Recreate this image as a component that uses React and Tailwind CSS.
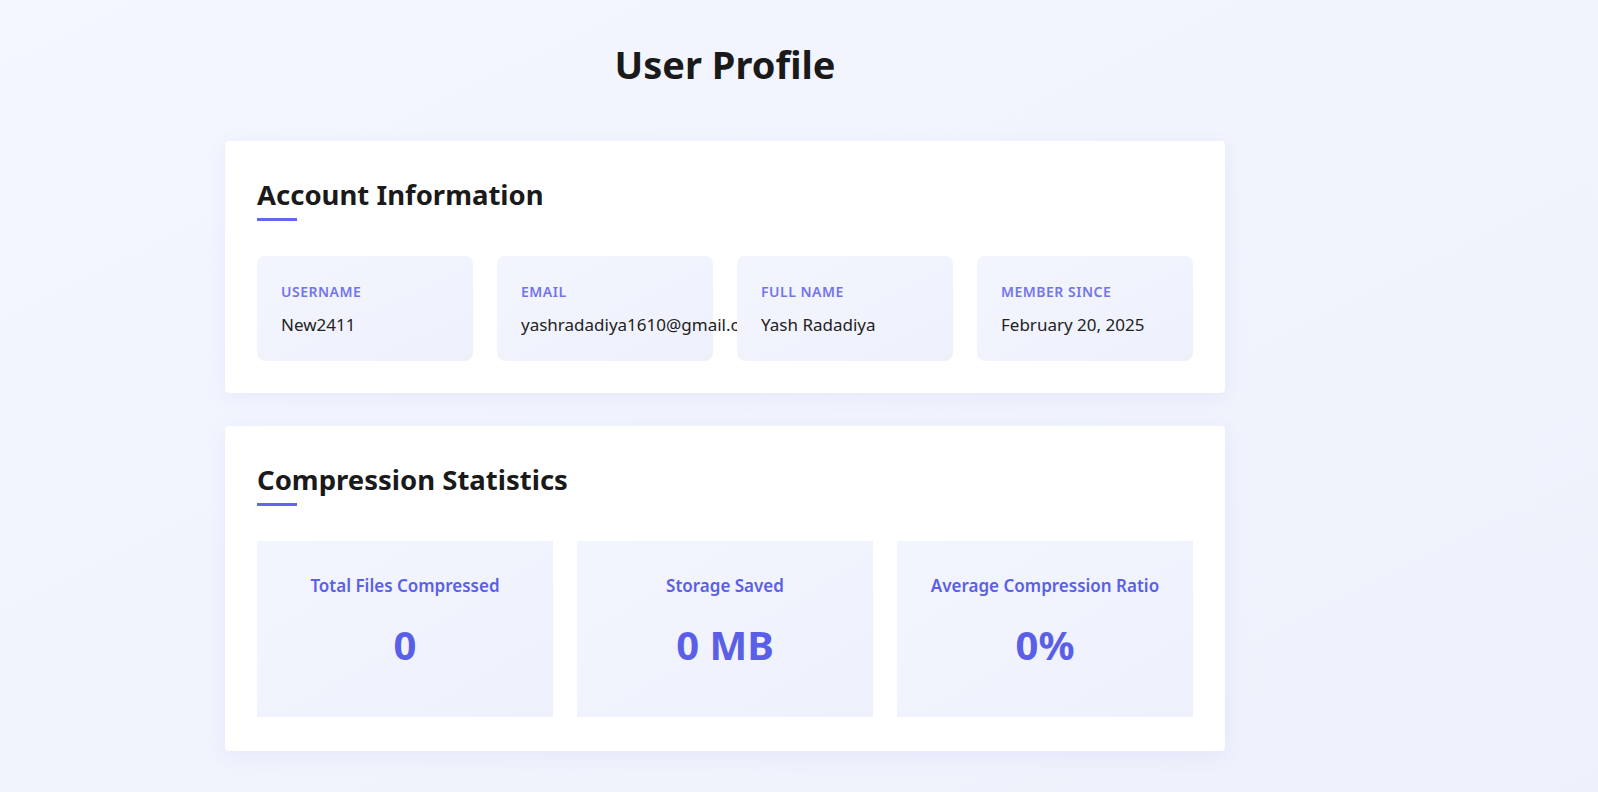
import React from 'react';

const accountInfo = [
  { label: 'Username', value: 'New2411' },
  { label: 'Email', value: 'yashradadiya1610@gmail.com' },
  { label: 'Full Name', value: 'Yash Radadiya' },
  { label: 'Member Since', value: 'February 20, 2025' },
];

const stats = [
  { label: 'Total Files Compressed', value: '0' },
  { label: 'Storage Saved', value: '0 MB' },
  { label: 'Average Compression Ratio', value: '0%' },
];

function SectionTitle({ children }) {
  return (
    <div>
      <h2 className="pt-1 text-[27.5px] leading-[36px] font-bold text-[#1a1a1a]">{children}</h2>
      <div className="mt-[5px] h-[3px] w-10 bg-[#6366f1]"></div>
    </div>
  );
}

export default function App() {
  return (
    <div
      className="min-h-screen bg-gradient-to-br from-[#f4f7ff] to-[#eef0fb] pt-[40px] pb-10"
      style={{ fontFamily: '"Noto Sans", "Open Sans", sans-serif' }}
    >
      <div className="ml-[225px] w-[1000px]">
        {/* Page title */}
        <h1 className="text-center text-[38px] leading-[48px] font-bold text-[#1a1a1a]">User Profile</h1>

        {/* Account Information */}
        <div className="mt-[53px] rounded-[4px] bg-white p-8 shadow-[0_4px_20px_rgba(99,102,241,0.08)]">
          <SectionTitle>Account Information</SectionTitle>
          <div className="mt-[35px] grid grid-cols-4 gap-6">
            {accountInfo.map((item) => (
              <div
                key={item.label}
                className="relative rounded-lg bg-gradient-to-br from-[#f3f5fe] to-[#eef1fc] px-6 pt-[26px] pb-6"
              >
                <div className="text-[14px] leading-[20px] font-semibold uppercase tracking-[0.5px] text-[#7275ea]">
                  {item.label}
                </div>
                {/* long values run into the gap, next tile covers the rest */}
                <div className="mt-[11px] w-[calc(100%+48px)] overflow-hidden whitespace-nowrap text-[17px] leading-[24px] text-[#222]">
                  {item.value}
                </div>
              </div>
            ))}
          </div>
        </div>

        {/* Compression Statistics */}
        <div className="mt-[33px] rounded-[4px] bg-white px-8 pt-8 pb-[34px] shadow-[0_4px_20px_rgba(99,102,241,0.08)]">
          <SectionTitle>Compression Statistics</SectionTitle>
          <div className="mt-[35px] grid grid-cols-3 gap-6">
            {stats.map((item) => (
              <div
                key={item.label}
                className="bg-gradient-to-br from-[#f3f5fe] to-[#eef1fc] px-4 pt-8 pb-[48px] text-center"
              >
                <div className="text-[17px] leading-[26px] font-semibold text-[#5b5fe6]">{item.label}</div>
                <div className="mt-[22px] text-[40px] leading-[48px] font-bold text-[#5b5fe8]">{item.value}</div>
              </div>
            ))}
          </div>
        </div>
      </div>
    </div>
  );
}
